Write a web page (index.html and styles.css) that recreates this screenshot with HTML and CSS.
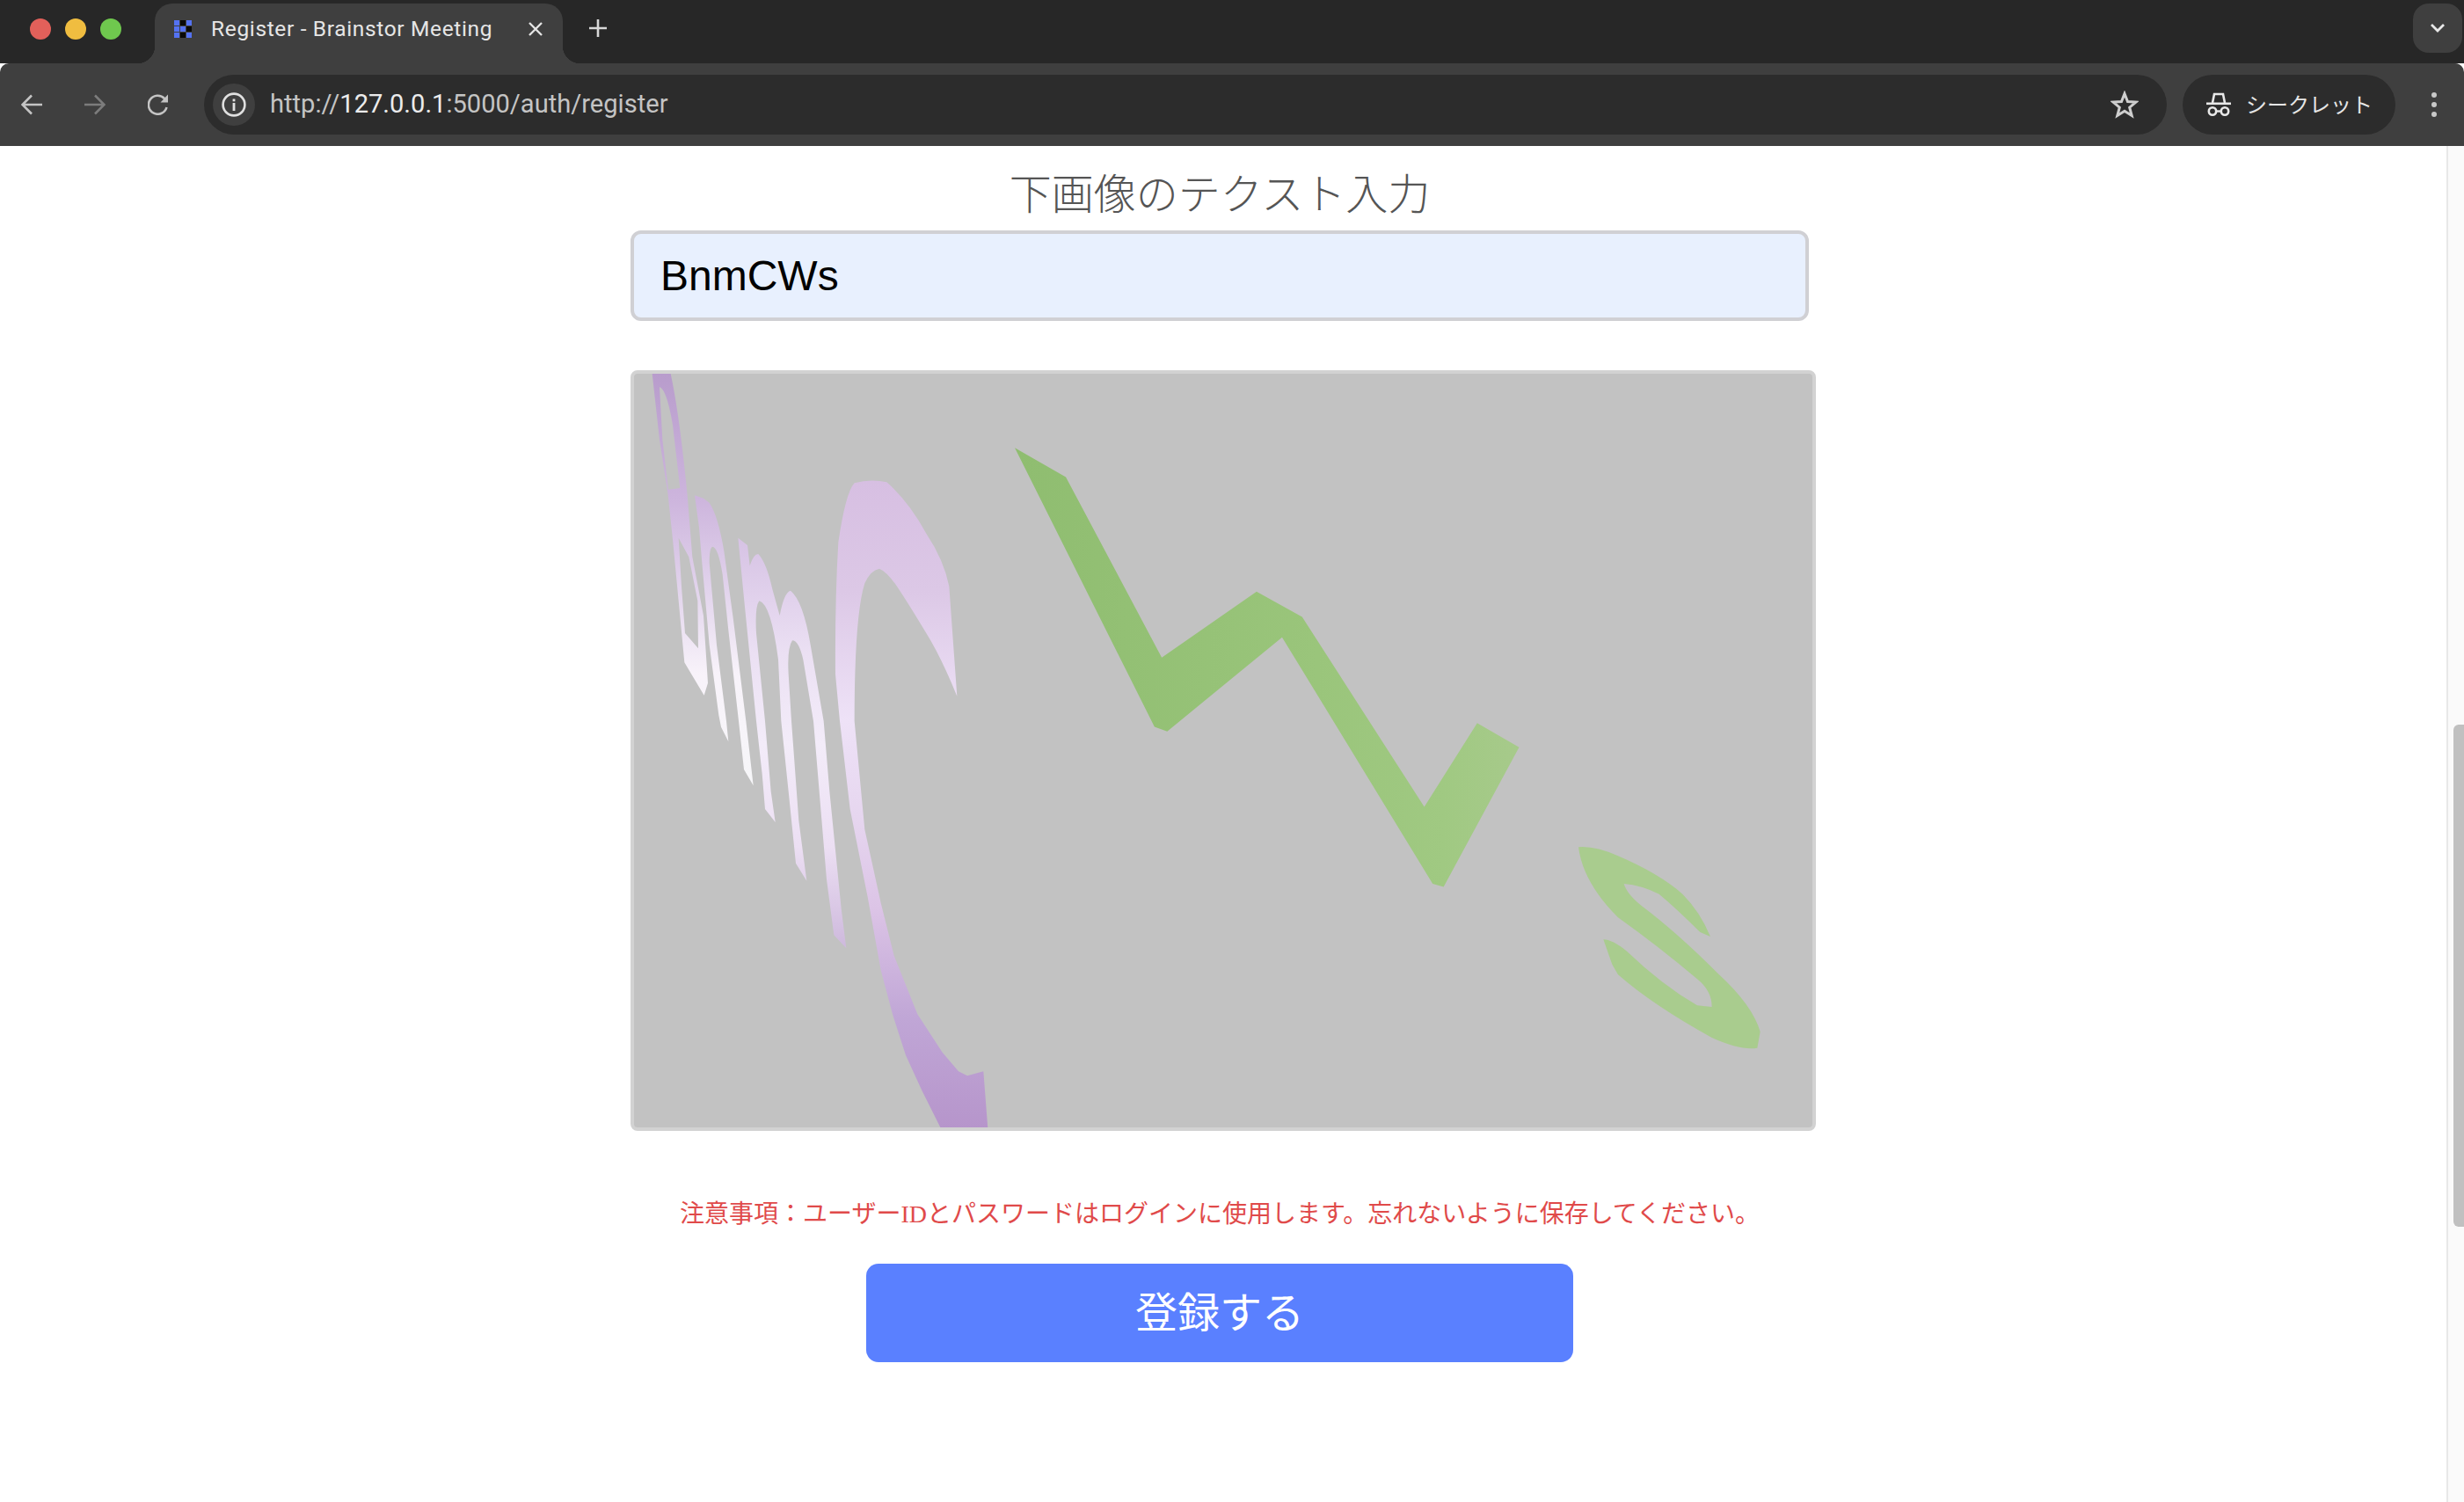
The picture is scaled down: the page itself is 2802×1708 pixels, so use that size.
FILE: index.html
```html
<!DOCTYPE html>
<html lang="ja">
<head>
<meta charset="utf-8">
<title>Register - Brainstor Meeting</title>
<link rel="stylesheet" href="styles.css">
</head>
<body>
<div class="browser">
  <header class="tabstrip">
    <div class="traffic">
      <span class="light red"></span><span class="light yellow"></span><span class="light green"></span>
    </div>
    <div class="tab">
      <svg class="favicon" width="20" height="20" viewBox="0 0 20 20">
        <rect x="0" y="0" width="6" height="6" fill="#5472f2"/><rect x="7" y="0" width="6" height="6" fill="#0a0a0a"/><rect x="14" y="0" width="6" height="6" fill="#5472f2"/>
        <rect x="0" y="7" width="6" height="6" fill="#5472f2"/><rect x="7" y="7" width="6" height="6" fill="#5472f2"/><rect x="14" y="7" width="6" height="6" fill="#0a0a0a"/>
        <rect x="0" y="14" width="6" height="6" fill="#5472f2"/><rect x="7" y="14" width="6" height="6" fill="#0a0a0a"/><rect x="14" y="14" width="6" height="6" fill="#5472f2"/>
      </svg>
      <span class="tab-title">Register - Brainstor Meeting</span>
      <svg class="tab-close" width="18" height="18" viewBox="0 0 18 18"><path d="M2 2L16 16M16 2L2 16" stroke="#e4e4e4" stroke-width="2.4" fill="none"/></svg>
    </div>
    <svg class="new-tab" width="22" height="22" viewBox="0 0 22 22"><path d="M11 1V21M1 11H21" stroke="#d8d8d8" stroke-width="2.6" fill="none"/></svg>
    <div class="tab-search">
      <svg width="18" height="12" viewBox="0 0 18 12"><path d="M2 2L9 9L16 2" stroke="#e8e8e8" stroke-width="2.8" fill="none"/></svg>
    </div>
  </header>
  <nav class="toolbar">
    <svg class="nav-icon" width="24" height="24" viewBox="0 0 24 24"><path d="M24 12H2M12 1.500L1.500 12L12 22.500" stroke="#c4c4c4" stroke-width="2.600" fill="none"/></svg>
    <svg class="nav-icon dim" width="24" height="24" viewBox="0 0 24 24"><path d="M0 12H22M12 1.500L22.500 12L12 22.500" stroke="#7c7c7c" stroke-width="2.600" fill="none"/></svg>
    <svg class="nav-icon" width="24" height="24" viewBox="0 0 24 24"><path d="M21.500 15A10.500 10.500 0 1 1 19 5L22 8" stroke="#c4c4c4" stroke-width="2.600" fill="none"/><path d="M23 0.500V9.500H14.500Z" fill="#c4c4c4"/></svg>
    <div class="omnibox">
      <span class="info-badge">
        <svg width="28" height="28" viewBox="0 0 28 28"><circle cx="14" cy="14" r="12.400" stroke="#e0e0e0" stroke-width="2.600" fill="none"/><rect x="12.600" y="12" width="2.800" height="9" fill="#e0e0e0"/><rect x="12.600" y="7.500" width="2.800" height="2.800" fill="#e0e0e0"/></svg>
      </span>
      <span class="url"><span class="url-dim">http://</span><span class="url-host">127.0.0.1</span><span class="url-dim">:5000/auth/register</span></span>
      <svg class="star" width="32" height="32" viewBox="0 0 32 32"><path d="M16 3.500L19.500 12.500L29 13L21.700 19.200L24.200 28.500L16 23.300L7.800 28.500L10.300 19.200L3 13L12.500 12.500Z" stroke="#cfcfcf" stroke-width="3" fill="none"/></svg>
    </div>
    <div class="incognito">
      <svg width="30" height="30" viewBox="0 0 30 30"><path d="M8 13L10 3H20L22 13" stroke="#e8e8e8" stroke-width="2.600" fill="none"/><rect x="1" y="12.500" width="28" height="2.600" fill="#e8e8e8"/><circle cx="8" cy="22.500" r="4.200" stroke="#e8e8e8" stroke-width="2.600" fill="none"/><circle cx="22" cy="22.500" r="4.200" stroke="#e8e8e8" stroke-width="2.600" fill="none"/><rect x="12" y="21.300" width="6" height="2.400" fill="#e8e8e8"/></svg>
      <span class="incognito-label">シークレット</span>
    </div>
    <div class="kebab"><i></i><i></i><i></i></div>
  </nav>
  <div class="viewport">
    <main class="page">
      <form class="form">
        <label class="field-label">下画像のテクスト入力</label>
        <input class="captcha-input" type="text" value="BnmCWs">
        <div class="captcha-image">
          <svg class="captcha-art" width="1340" height="857" viewBox="721 425 1340 857">
            <defs>
              <linearGradient id="gb" gradientUnits="userSpaceOnUse" x1="0" y1="75" x2="0" y2="1500">
                <stop offset="0" stop-color="#b89ccc"/><stop offset=".3" stop-color="#cdb5dd"/><stop offset=".52" stop-color="#e2d4ec"/><stop offset=".72" stop-color="#f8f3fa"/><stop offset="1" stop-color="#f6f6f8"/>
              </linearGradient>
              <linearGradient id="gm" gradientUnits="userSpaceOnUse" x1="0" y1="635" x2="0" y2="2040">
                <stop offset="0" stop-color="#d6c2e4"/><stop offset=".28" stop-color="#ebe0f3"/><stop offset=".5" stop-color="#f3ecf9"/><stop offset=".75" stop-color="#ecdff3"/><stop offset="1" stop-color="#cdb8dc"/>
              </linearGradient>
              <linearGradient id="gc" gradientUnits="userSpaceOnUse" x1="0" y1="440" x2="0" y2="2650">
                <stop offset="0" stop-color="#d7bfe2"/><stop offset=".17" stop-color="#dcc8e6"/><stop offset=".37" stop-color="#eee2f7"/><stop offset=".52" stop-color="#e6d6ef"/><stop offset=".66" stop-color="#dcc4e6"/><stop offset=".83" stop-color="#c0a6d6"/><stop offset="1" stop-color="#b695cb"/>
              </linearGradient>
              <linearGradient id="gg" gradientUnits="userSpaceOnUse" x1="82" y1="0" x2="1465" y2="0">
                <stop offset="0" stop-color="#8fbd70"/><stop offset=".6" stop-color="#9ac57b"/><stop offset=".85" stop-color="#a0c982"/><stop offset="1" stop-color="#a7ca8b"/>
              </linearGradient>
            </defs>
            <g transform="translate(700 400) scale(.33333)">
              <path fill="url(#gb)" fill-rule="evenodd" d="M125 75L188 75Q215 200 240 440L245 490L262 700L300 900L315 1130L302 1172L235 1060L215 850L195 640L178 480L150 300ZM150 120Q175 130 195 250L220 465L180 470L160 300ZM215 635L250 700L280 850L282 1012L237 960L225 800Z"/>
              <path fill="url(#gb)" d="M270 490L300 500L320 515Q350 560 370 680L400 900L445 1260L470 1480L438 1425L420 1260L385 950L365 760Q350 665 330 665Q320 670 320 720L345 1000L378 1260L385 1330L360 1280L352 1240L320 1000L295 720L285 600Z"/>
              <path fill="url(#gm)" d="M418 635L450 660L458 730Q470 690 487 690Q515 720 535 810L560 900Q575 820 597 815Q640 850 665 1000L710 1260L730 1500L770 1900L787 2035L745 1990L720 1800L675 1260L640 1050Q625 985 603 985Q585 1010 590 1100L600 1260L625 1600L652 1805L615 1745L590 1500L565 1260L555 1050Q530 860 490 850Q475 870 480 960L510 1260L530 1500L545 1605L510 1560L500 1440L480 1260L440 860Z"/>
              <path fill="url(#gc)" d="M760 650Q785 480 815 448Q870 432 925 445Q1000 510 1060 620Q1120 710 1138 800L1165 1175Q1110 1040 1060 960Q1000 860 960 800Q925 750 900 740Q870 745 850 790Q815 900 815 1260L850 1630L905 1880L950 2060L1030 2260L1115 2390L1170 2455L1200 2470L1255 2455L1270 2650L1110 2650L1045 2520L990 2400L945 2260L905 2110L860 1860L800 1560L765 1260L750 1100Q748 850 760 650Z"/>
            </g>
            <g transform="translate(1120 480) scale(.41467 .35714)">
              <path fill="url(#gg)" d="M82 82L222 175L485 750L745 540L870 620L1205 1225L1350 958L1465 1035L1258 1480L1228 1470L815 685L500 985L465 970Z"/>
            </g>
            <g transform="translate(1700 900) scale(.33333)">
              <path fill="#a9cc8e" d="M285 190Q340 185 420 220Q560 280 640 350Q700 410 735 495L700 480Q620 400 560 350Q500 320 440 315Q450 350 500 390Q620 480 760 620Q880 730 905 820L895 875Q840 885 740 840Q540 730 420 625L400 590L370 505Q400 505 450 545Q570 660 690 730L740 735Q740 680 690 640Q560 530 420 430Q300 310 285 190Z"/>
            </g>
          </svg>
        </div>
        <p class="notice">注意事項：ユーザーIDとパスワードはログインに使用します。忘れないように保存してください。</p>
        <button class="submit" type="button">登録する</button>
      </form>
    </main>
    <aside class="scrollbar"><div class="thumb"></div></aside>
  </div>
</div>
</body>
</html>
```
FILE: styles.css
```css
* { box-sizing: border-box; }
html, body { margin: 0; padding: 0; height: 100%; overflow: hidden; background: #fff; }

.browser { width: 2802px; height: 1708px; display: flex; flex-direction: column; }

/* tab strip */
.tabstrip { height: 72px; flex: none; background: #272727; display: flex; align-items: flex-start; position: relative; }
.traffic { display: flex; gap: 16px; padding: 21px 0 0 34px; width: 176px; flex: none; }
.light { width: 24px; height: 24px; border-radius: 50%; }
.red { background: #e2605a; }
.yellow { background: #f0bd40; }
.green { background: #6fc84e; }

.tab { position: relative; margin-top: 4px; width: 464px; height: 68px; background: #3f3f3f; border-radius: 20px 20px 0 0; display: flex; align-items: center; padding: 0 22px 10px 22px; flex: none; }
.tab::before, .tab::after { content: ""; position: absolute; bottom: 0; width: 20px; height: 20px; }
.tab::before { left: -20px; background: radial-gradient(circle at 0 0, transparent 20px, #3f3f3f 20.500px); }
.tab::after { right: -20px; background: radial-gradient(circle at 100% 0, transparent 20px, #3f3f3f 20.500px); }
.favicon { flex: none; }
.tab-title { margin-left: 22px; flex: 1; font: 24.500px/1 Roboto, sans-serif; color: #e6e6e6; white-space: nowrap; letter-spacing: .65px; }
.tab-close { flex: none; }
.new-tab { margin: 21px 0 0 29px; flex: none; }
.tab-search { margin: 4px 2px 0 auto; width: 56px; height: 56px; border-radius: 18px; background: #3f3f3f; display: flex; align-items: center; justify-content: center; flex: none; }

/* toolbar */
.toolbar { height: 94px; flex: none; background: #3f3f3f; display: flex; align-items: center; padding-left: 24px; border-radius: 10px 10px 0 0; }
.nav-icon { flex: none; margin-right: 48px; }
.nav-icon:nth-child(3) { margin-right: 40px; }
.omnibox { width: 2232px; height: 68px; border-radius: 34px; background: #2c2c2c; display: flex; align-items: center; padding: 0 32px 0 10px; flex: none; }
.info-badge { width: 48px; height: 48px; border-radius: 50%; background: #3f3f3f; display: flex; align-items: center; justify-content: center; flex: none; }
.url { margin-left: 17px; flex: 1; font: 29.100px/1 Roboto, sans-serif; white-space: nowrap; }
.url-dim { color: #c4c4c4; }
.url-host { color: #ececec; }
.star { flex: none; }
.incognito { margin-left: 18px; width: 242px; height: 68px; border-radius: 34px; background: #2c2c2c; display: flex; align-items: center; padding-left: 26px; flex: none; }
.incognito-label { margin: -3px 0 0 16px; font: 24px/1 "Noto Sans CJK JP", sans-serif; color: #e6e6e6; white-space: nowrap; }
.kebab { margin-left: 41px; display: flex; flex-direction: column; gap: 5px; flex: none; }
.kebab i { display: block; width: 6px; height: 6px; border-radius: 50%; background: #c8c8c8; }

/* page */
.viewport { flex: 1; display: flex; min-height: 0; }
.page { flex: 1; padding-right: 8px; background: #fff; display: flex; justify-content: center; }
.form { width: 1340px; display: flex; flex-direction: column; align-items: center; padding-top: 28px; }
.field-label { display: block; font: 48px/56px "Liberation Serif", "Noto Sans CJK JP", serif; color: #555; text-align: center; margin-bottom: 12px; font-weight: 300; }
.captcha-input { display: block; width: 100%; height: 103px; border: 4px solid #d0d0d4; border-radius: 12px; background: #e8f0fe; padding: 0 30px; font: 48px "Liberation Sans", Arial, sans-serif; color: #000; outline: none; }
.captcha-image { align-self: flex-start; margin-top: 56px; width: 1348px; height: 865px; flex: none; border: 4px solid #d2d2d2; border-radius: 8px; background: #c2c2c2; overflow: hidden; }
.captcha-art { display: block; }
.notice { margin: 74px 0 37px; padding-top: 2px; height: 40px; font: 28px/38px "Liberation Serif", "Noto Sans CJK JP", serif; color: #e04a4a; text-align: center; white-space: nowrap; }
.submit { width: 804px; height: 112px; flex: none; border: 0; border-radius: 14px; background: #5a80ff; color: #fff; font: 48px/1 "Liberation Sans", "Noto Sans CJK JP", sans-serif; padding: 2px 0 0; }

/* scrollbar */
.scrollbar { width: 20px; flex: none; position: relative; background: #fafafa; border-left: 2px solid #e8e8e8; }
.thumb { position: absolute; top: 658px; right: 0; width: 12px; height: 571px; background: #c0c0c0; border-radius: 6px 0 0 6px; }
```
